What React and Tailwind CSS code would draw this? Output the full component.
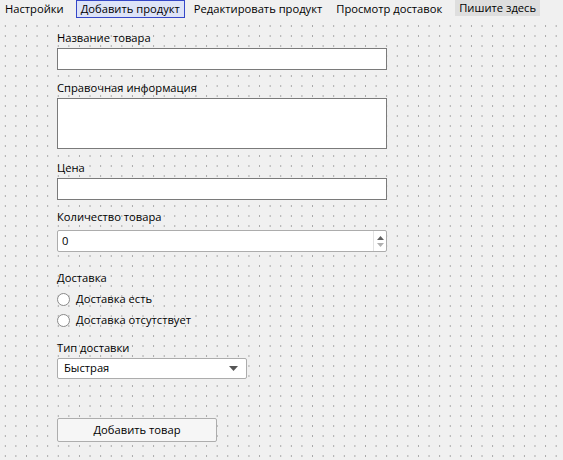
import React, { useState } from "react";

const MENU = ["Настройки", "Добавить продукт", "Редактировать продукт", "Просмотр доставок"];
const MENU_GAP = ["mr-[7px]", "mr-[4px]", "mr-[4px]", "mr-[4px]"];

const gridStyle =
  "bg-[#f0f0f0] bg-[radial-gradient(circle,#a8a8a8_0.6px,transparent_0.9px)] bg-[length:10.6px_10px] bg-[position:0px_3px]";

function Label({ children, className = "" }) {
  return (
    <div className={`h-[16px] leading-[16px] text-[11.2px] whitespace-nowrap text-[#000] ${className}`}>
      {children}
    </div>
  );
}

function TextBox({ className = "", value = "" }) {
  return (
    <div
      className={`w-[330px] border border-[#7a7a7a] bg-white text-[11.2px] leading-[20px] px-[4px] ${className}`}
    >
      {value}
    </div>
  );
}

function Radio({ label }) {
  return (
    <div className="flex items-center gap-[6px] h-[21px]">
      <span className="w-[13px] h-[13px] rounded-full border border-[#8a8a8a] bg-white" />
      <span className="text-[11.2px] whitespace-nowrap">{label}</span>
    </div>
  );
}

export default function App() {
  const [active] = useState(1);

  return (
    <div
      className="w-[563px] h-[460px] overflow-hidden bg-[#f0f0f0] text-black"
      style={{ fontFamily: '"Open Sans", "Noto Sans", sans-serif' }}
    >
      <div className="flex h-[18px] items-start text-[11.2px] bg-[#f0f0f0] whitespace-nowrap">
        {MENU.map((item, i) => (
          <div
            key={item}
            className={`h-[18px] leading-[16px] px-[4px] ${MENU_GAP[i]} ${
              i === active ? "border border-[#3547c8] bg-[#dde3f8]" : "border border-transparent"
            }`}
          >
            {item}
          </div>
        ))}
        <div className="h-[16px] leading-[16px] px-[4px] ml-[4px] bg-[#dedede]">Пишите здесь</div>
      </div>

      <div className={`h-[442px] ${gridStyle}`}>
        <div className="pl-[57px] pt-[12px] flex flex-col">
          <Label>Название товара</Label>
          <TextBox className="mt-[2px] h-[22px]" />

          <Label className="mt-[10px]">Справочная информация</Label>
          <TextBox className="mt-[2px] h-[51px]" />

          <Label className="mt-[11px]">Цена</Label>
          <TextBox className="mt-[2px] h-[22px]" />

          <Label className="mt-[9px]">Количество товара</Label>
          <div className="mt-[5px] w-[330px] h-[22px] flex border border-[#acacac] rounded-[2px] bg-white">
            <div className="flex-1 text-[11.2px] leading-[20px] px-[4px]">0</div>
            <div className="w-[13px] flex flex-col items-center justify-center gap-[3px] border-l border-[#e3e3e3]">
              <svg width="7" height="4" viewBox="0 0 7 4">
                <path d="M0 4 L3.5 0 L7 4 Z" fill="#606060" />
              </svg>
              <svg width="7" height="4" viewBox="0 0 7 4">
                <path d="M0 0 L3.5 4 L7 0 Z" fill="#b0b0b0" />
              </svg>
            </div>
          </div>

          <Label className="mt-[18px]">Доставка</Label>
          <div className="mt-[3px]">
            <Radio label="Доставка есть" />
            <Radio label="Доставка отсутствует" />
          </div>

          <Label className="mt-[9px]">Тип доставки</Label>
          <div className="mt-[2px] w-[190px] h-[21px] flex items-center justify-between border border-[#acacac] rounded-[2px] bg-white px-[6px]">
            <span className="text-[11.2px]">Быстрая</span>
            <svg width="9" height="5" viewBox="0 0 9 5" className="mr-[2px]">
              <path d="M0 0 L4.5 5 L9 0 Z" fill="#555" />
            </svg>
          </div>

          <button
            type="button"
            className="mt-[39px] w-[160px] h-[24px] border border-[#adadad] rounded-[2px] bg-[#f6f6f6] text-[11.2px]"
          >
            Добавить товар
          </button>
        </div>
      </div>
    </div>
  );
}
